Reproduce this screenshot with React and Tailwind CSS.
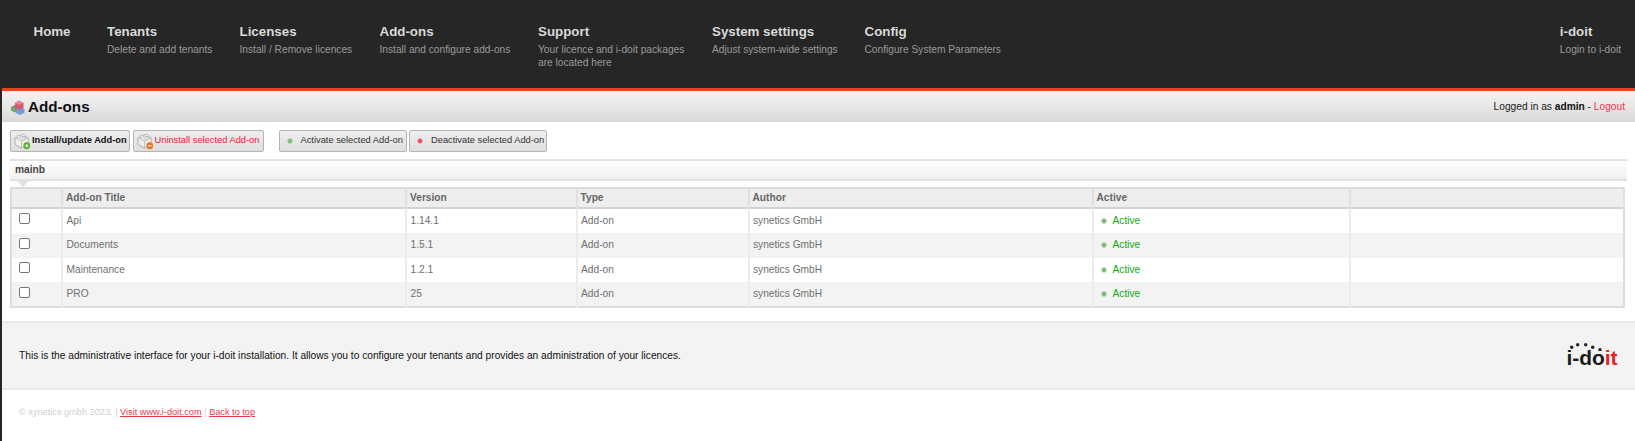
const nav = [
  { t: "Home", s: [], w: "w-[73.5px]" },
  { t: "Tenants", s: ["Delete and add tenants"], w: "w-[132.5px]" },
  { t: "Licenses", s: ["Install / Remove licences"], w: "w-[140px]" },
  { t: "Add-ons", s: ["Install and configure add-ons"], w: "w-[158.5px]" },
  { t: "Support", s: ["Your licence and i-doit packages", "are located here"], w: "w-[174px]" },
  { t: "System settings", s: ["Adjust system-wide settings"], w: "w-[152.5px]" },
  { t: "Config", s: ["Configure System Parameters"], w: "w-[200px]" },
];
const rows = [
  ["Api", "1.14.1"],
  ["Documents", "1.5.1"],
  ["Maintenance", "1.2.1"],
  ["PRO", "25"],
];

function Brick({ badge }) {
  return (
    <svg width="18" height="18" viewBox="0 0 19 19" className="shrink-0">
      <path d="M2 6 L9 3 L16 6 L16 13 L9 17 L2 13 Z" fill="#eeeeee" stroke="#b0b0b0" strokeWidth="1" />
      <path d="M2 6 L9 9.5 L16 6 M9 9.5 L9 17" fill="none" stroke="#bdbdbd" strokeWidth="1" />
      <ellipse cx="6" cy="4.6" rx="2" ry="1.3" fill="#f4f4f4" stroke="#b0b0b0" strokeWidth="0.8" />
      <ellipse cx="11" cy="3.6" rx="2" ry="1.3" fill="#f4f4f4" stroke="#b0b0b0" strokeWidth="0.8" />
      <ellipse cx="11" cy="6.6" rx="2" ry="1.3" fill="#f4f4f4" stroke="#b0b0b0" strokeWidth="0.8" />
      <circle cx="14.5" cy="14.5" r="3.6" fill={badge === "plus" ? "#5cb030" : "#e8772e"} />
      <path d={badge === "plus" ? "M12.8 14.5 H16.2 M14.5 12.8 V16.2" : "M12.8 14.5 H16.2"} stroke="#ffffff" strokeWidth="1.2" />
    </svg>
  );
}

function Dot({ color, ring }) {
  return (
    <svg width="6" height="6" viewBox="0 0 6 6" className="shrink-0">
      <circle cx="3" cy="3" r="2.4" fill={color} stroke={ring} strokeWidth="0.8" />
    </svg>
  );
}

function Btn({ className, children }) {
  return (
    <button className={`flex h-[22px] items-center whitespace-nowrap rounded-[2px] border border-[#b4b4b4] bg-gradient-to-b from-[#eeeeee] to-[#dedede] pb-[1px] text-[9.3px] leading-none ${className}`}>
      {children}
    </button>
  );
}

function Th({ children, className = "" }) {
  return (
    <th className={`border-r-2 border-[#e0e0e0] pl-[3px] text-left align-middle font-bold text-[#666666] ${className}`}>
      {children}
    </th>
  );
}

function Td({ children, className = "" }) {
  return <td className={`border-r-2 border-[#ececec] pl-[3.5px] align-middle ${className}`}>{children}</td>;
}

export default function App() {
  return (
    <div className="min-h-[441px] border-l-2 border-[#262626] bg-white font-['Liberation_Sans',Arial,sans-serif] text-[10.2px] text-[#111111]">
      <header className="flex h-[91px] justify-between border-b-[3px] border-[#e9431a] bg-[#262626] pl-[31.5px] pr-[14px] pt-[24px]">
        <nav className="flex">
          {nav.map((n) => (
            <div key={n.t} className={n.w}>
              <div className="text-[13.33px] font-bold leading-[16px] text-[#d9d9d9]">{n.t}</div>
              <div className="mt-[3px] text-[10.2px] leading-[13px] text-[#9a9a9a]">
                {n.s.map((l) => (
                  <div key={l}>{l}</div>
                ))}
              </div>
            </div>
          ))}
        </nav>
        <div>
          <div className="text-[13.33px] font-bold leading-[16px] text-[#d9d9d9]">i-doit</div>
          <div className="mt-[3px] text-[10.2px] leading-[13px] text-[#9a9a9a]">Login to i-doit</div>
        </div>
      </header>

      <div className="flex h-[31px] items-center justify-between bg-gradient-to-b from-[#f4f4f4] to-[#d9d9d9] pl-[8px] pr-[10px]">
        <div className="flex items-center gap-[2px]">
          <svg width="16" height="16" viewBox="0 0 16 16">
            <path d="M1 8 L5 6 L8 8 L8 12 L5 13.5 L1 11.5 Z" fill="#6fa56a" />
            <path d="M6 10 L10 8 L14.5 10 L14.5 14 L10 16 L6 14 Z" fill="#6f9fd6" />
            <path d="M5 4 L9 1.5 L13.5 4 L13.5 9 L9 11 L5 9 Z" fill="#d9566a" />
            <path d="M5 4 L9 6 L13.5 4 L9 1.5 Z" fill="#ee8793" />
          </svg>
          <h1 className="text-[15.2px] font-bold leading-none text-[#111111]">Add-ons</h1>
        </div>
        <div className="text-[#222222]">
          Logged in as <b className="text-[#111111]">admin</b> - <span className="text-[#e8394a]">Logout</span>
        </div>
      </div>

      <div className="pl-[8px] pr-[8px]">
        <div className="flex pt-[8px]">
          <Btn className="w-[120px] justify-start gap-[1px] pl-[2px] font-bold">
            <Brick badge="plus" />
            Install/update Add-on
          </Btn>
          <Btn className="ml-[2.5px] w-[131px] justify-start gap-[1px] pl-[2px] text-[#e8203a]">
            <Brick badge="minus" />
            Uninstall selected Add-on
          </Btn>
          <Btn className="ml-[15px] w-[128px] justify-start gap-[8px] pl-[7px] text-[#333333]">
            <Dot color="#7cb876" ring="#a9d3a5" />
            Activate selected Add-on
          </Btn>
          <Btn className="ml-[2.5px] w-[138px] justify-start gap-[8px] pl-[7px] text-[#333333]">
            <Dot color="#e04a5a" ring="#f0a0a8" />
            Deactivate selected Add-on
          </Btn>
        </div>

        <div className="relative mt-[7px] flex h-[22px] items-center border-b-2 border-t-2 border-[#e2e2e2] bg-gradient-to-b from-white to-[#f1f1f1] pl-[5px] font-bold text-[#444444]">
          mainb
          <span className="absolute left-[7px] top-[20px] h-0 w-0 border-l-[6px] border-r-[6px] border-t-[6px] border-l-transparent border-r-transparent border-t-[#e2e2e2]" />
        </div>

        <table className="mt-[6px] w-[1615px] table-fixed border-collapse border-2 border-[#dcdcdc] text-[#707070]">
          <colgroup>
            <col className="w-[51px]" />
            <col className="w-[344px]" />
            <col className="w-[170.5px]" />
            <col className="w-[172px]" />
            <col className="w-[344px]" />
            <col className="w-[257px]" />
            <col />
          </colgroup>
          <thead>
            <tr className="h-[20px] border-b-2 border-[#d2d2d2] bg-[#eeeeee]">
              <Th />
              <Th>Add-on Title</Th>
              <Th>Version</Th>
              <Th>Type</Th>
              <Th>Author</Th>
              <Th>Active</Th>
              <Th className="border-r-0" />
            </tr>
          </thead>
          <tbody>
            {rows.map((r, i) => (
              <tr key={r[0]} className={`h-[24.75px] ${i % 2 ? "bg-[#f3f3f3]" : "bg-white"}`}>
                <Td>
                  <span className="ml-[3px] mb-[4px] block h-[11px] w-[11px] rounded-[2px] border border-[#767676] bg-white" />
                </Td>
                <Td>{r[0]}</Td>
                <Td>{r[1]}</Td>
                <Td>Add-on</Td>
                <Td>synetics GmbH</Td>
                <Td>
                  <span className="ml-[3.5px] flex items-center gap-[6px] text-[#11aa11]">
                    <Dot color="#7cb876" ring="#a9d3a5" />
                    Active
                  </span>
                </Td>
                <td />
              </tr>
            ))}
          </tbody>
        </table>
      </div>

      <div className="mt-[13px] flex h-[69px] items-center justify-between border-b-2 border-t-2 border-[#e8e8e8] bg-[#f3f3f3] pl-[17px] pr-[17px]">
        <p className="text-[#111111]">
          This is the administrative interface for your i-doit installation. It allows you to configure your tenants and provides an administration of your licences.
        </p>
        <div className="relative flex h-[24px] w-[52px] items-end justify-center">
          <svg width="40" height="10" viewBox="0 0 40 10" className="absolute left-[3px] top-[-3px]">
            {[[2.7, 6.3], [8.7, 3.7], [16.7, 3.7], [23.7, 6.3], [31, 8.7]].map(([x, y]) => (
              <circle key={x} cx={x} cy={y} r="1.7" fill="#222222" />
            ))}
          </svg>
          <span className="whitespace-nowrap text-[20.9px] font-bold leading-[20px] text-[#1a1a1a]">
            i-do<span className="text-[#e8202a]">it</span>
          </span>
        </div>
      </div>

      <div className="pl-[17px] pt-[16px] text-[9.2px] text-[#d0d0d0]">
        © synetics gmbh 2023. | <a className="text-[#e8394a] underline">Visit www.i-doit.com</a> | <a className="text-[#e8394a] underline">Back to top</a>
      </div>
    </div>
  );
}
